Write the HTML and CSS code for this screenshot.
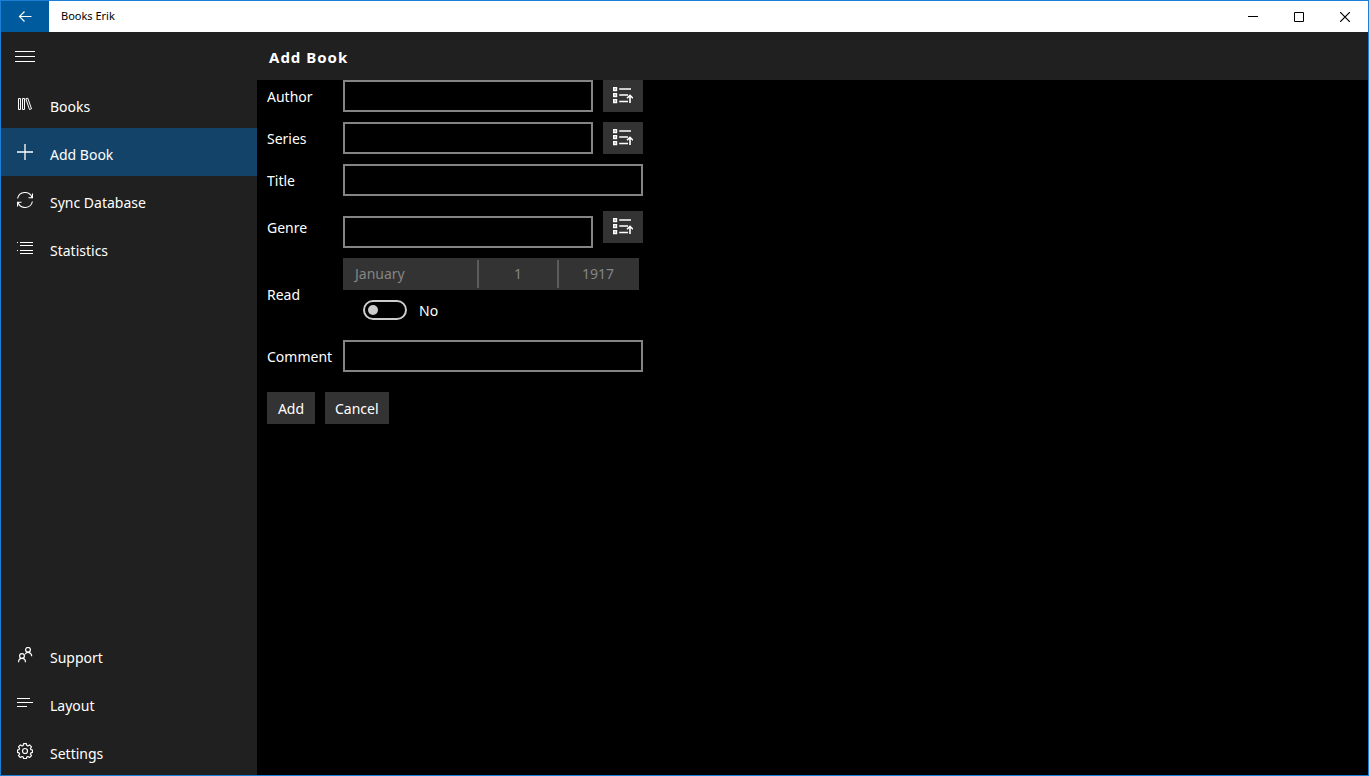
FILE: index.html
```html
<!DOCTYPE html>
<html lang="en">
<head>
<meta charset="utf-8">
<title>Books Erik</title>
<link rel="stylesheet" href="styles.css">
</head>
<body>
<svg class="sprite" aria-hidden="true">
  <symbol id="pick" viewBox="0 0 20 20">
    <g fill="none" stroke="currentColor" stroke-width="1.6">
      <path d="M.8 1.800h2.600v2.600H.8zM.8 7.800h2.600v2.600H.8zM.8 13.800h2.600v2.600H.8z"/>
      <path d="M6.200 3H18M6.200 9H15M6.200 15.500H15"/>
      <path d="M17 17V9.500M14 12.300l3-3 3 3"/>
    </g>
  </symbol>
</svg>
<div class="window">
  <header class="titlebar">
    <button class="back" type="button" aria-label="Back">
      <svg width="14" height="12" viewBox="0 0 14 12"><path d="M13.500 5.500h-12M6.500.5l-5 5 5 5" fill="none" stroke="currentColor" stroke-width="1.200"/></svg>
    </button>
    <span class="app-name">Books Erik</span>
    <div class="caption-buttons">
      <button type="button" aria-label="Minimize"><svg width="10" height="10" viewBox="0 0 10 10"><path d="M0 4.500h10" stroke="currentColor"/></svg></button>
      <button type="button" aria-label="Maximize"><svg width="10" height="10" viewBox="0 0 10 10"><path d="M.5.5h9v9h-9z" fill="none" stroke="currentColor"/></svg></button>
      <button type="button" aria-label="Close"><svg width="10" height="10" viewBox="0 0 10 10"><path d="M0 0l10 10M10 0L0 10" stroke="currentColor" stroke-width="1.200"/></svg></button>
    </div>
  </header>
  <div class="body">
    <nav class="sidebar">
      <button class="menu-toggle" type="button" aria-label="Menu">
        <svg width="20" height="12" viewBox="0 0 20 12"><path d="M0 1.500h20M0 6.500h20M0 11.500h20" stroke="currentColor"/></svg>
      </button>
      <a class="nav-item" href="#books">
        <svg class="icon" viewBox="0 0 16 16" fill="none" stroke="currentColor"><path d="M1.500 2.500h2v11h-2zM5.500 2.500h2v11h-2zM8.800 2.800l2-.6 3.700 10.600-2 .7z"/></svg>
        <span>Books</span>
      </a>
      <a class="nav-item current" href="#add" aria-current="page">
        <svg class="icon" viewBox="0 0 16 16" fill="none" stroke="currentColor" stroke-width="1.300"><path d="M8 0v16M0 8h16"/></svg>
        <span>Add Book</span>
      </a>
      <a class="nav-item" href="#sync">
        <svg class="icon" viewBox="0 0 16 16" fill="none" stroke="currentColor" stroke-width="1.100"><path d="M.6 6.500A7.500 7.500 0 0 1 15 5.500M15.500 1.500v4.200h-4M15.400 9.500A7.500 7.500 0 0 1 1 10.500M.5 14.500v-4.200h4"/></svg>
        <span>Sync Database</span>
      </a>
      <a class="nav-item" href="#statistics">
        <svg class="icon" viewBox="0 0 16 16" fill="none" stroke="currentColor"><path d="M3 2.500h13M3 5.500h13M3 10.500h13M3 13.500h13M0 2.500h1M0 10.500h1"/></svg>
        <span>Statistics</span>
      </a>
      <div class="spacer"></div>
      <a class="nav-item" href="#support">
        <svg class="icon" viewBox="0 0 16 16" fill="none" stroke="currentColor" stroke-width="1.200"><circle cx="11" cy="2.800" r="2.400"/><circle cx="5" cy="9" r="2.400"/><path d="M1.500 15.200c.2-5 6.800-5 7 0M8.200 7.200c1.800-3 6.300-2 6.500 2"/></svg>
        <span>Support</span>
      </a>
      <a class="nav-item" href="#layout">
        <svg class="icon" viewBox="0 0 16 16" fill="none" stroke="currentColor"><path d="M0 3.500h13M0 7.500h16M0 11.500h10"/></svg>
        <span>Layout</span>
      </a>
      <a class="nav-item" href="#settings">
        <svg class="icon" viewBox="0 0 16 16" fill="none" stroke="currentColor" stroke-width="1.200" stroke-linejoin="round"><circle cx="8" cy="8" r="2.500"/><path d="M6.600.6h2.800l.4 1.900 1.100.5 1.700-1.100 1.900 1.900-1.100 1.700.5 1.100 1.600.4v2.400l-1.600.5-.5 1.100 1.100 1.600-1.900 1.900-1.700-1-1.100.5-.4 1.600H6.600l-.4-1.600-1.100-.5-1.700 1-1.900-1.900 1.100-1.600-.5-1.100L.5 9.400V7l1.600-.4.500-1.100-1.100-1.700 1.900-1.900L5.100 3l1.100-.5z"/></svg>
        <span>Settings</span>
      </a>
    </nav>
    <main class="content">
      <h1 class="page-title">Add Book</h1>
      <form class="book-form">
        <label for="author">Author</label>
        <div class="field">
          <input class="text short" id="author" type="text">
          <button class="pick" type="button" aria-label="Choose author"><svg width="20" height="20"><use href="#pick"/></svg></button>
        </div>
        <label for="series">Series</label>
        <div class="field">
          <input class="text short" id="series" type="text">
          <button class="pick" type="button" aria-label="Choose series"><svg width="20" height="20"><use href="#pick"/></svg></button>
        </div>
        <label for="title">Title</label>
        <div class="field"><input class="text" id="title" type="text"></div>
        <label for="genre">Genre</label>
        <div class="field">
          <input class="text short lowered" id="genre" type="text">
          <button class="pick" type="button" aria-label="Choose genre"><svg width="20" height="20"><use href="#pick"/></svg></button>
        </div>
        <label for="read">Read</label>
        <div class="read">
          <button class="date" type="button" disabled>
            <span class="month">January</span><span>1</span><span>1917</span>
          </button>
          <div class="switch-row">
            <input class="switch" id="read" type="checkbox" role="switch">
            <label for="read">No</label>
          </div>
        </div>
        <label for="comment">Comment</label>
        <div class="field"><input class="text" id="comment" type="text"></div>
        <div class="actions">
          <button type="submit">Add</button>
          <button type="button">Cancel</button>
        </div>
      </form>
    </main>
  </div>
</div>
</body>
</html>
```
FILE: styles.css
```css
* {
  box-sizing: border-box;
}

body {
  margin: 0;
  background: #000;
  color: #fff;
  font: 14px/20px "Noto Sans", "Open Sans", sans-serif;
}

button,
input {
  margin: 0;
  padding: 0;
  border: 0;
  border-radius: 0;
  background: none;
  color: inherit;
  font: inherit;
}

svg {
  display: block;
  flex: none;
}

.sprite {
  position: absolute;
  width: 0;
  height: 0;
}

.window {
  display: flex;
  flex-direction: column;
  min-height: 100vh;
  border: 1px solid #1c7fd6;
}

.titlebar {
  display: flex;
  height: 31px;
  background: #fff;
  color: #000;
  font-size: 11px;
}

.back {
  display: grid;
  place-items: center;
  width: 48px;
  background: #005a9e;
  color: #fff;
}

.app-name {
  margin-left: 12px;
  line-height: 30px;
}

.caption-buttons {
  display: flex;
  margin-left: auto;
}

.caption-buttons button {
  display: grid;
  place-items: center;
  width: 46px;
}

.body {
  display: flex;
  flex: 1;
}

.sidebar {
  display: flex;
  flex-direction: column;
  flex: none;
  width: 256px;
  background: #202020;
}

.menu-toggle {
  display: grid;
  place-items: center;
  width: 48px;
  height: 48px;
}

.nav-item {
  display: flex;
  align-items: center;
  gap: 17px;
  height: 48px;
  padding-left: 16px;
  color: #fff;
  text-decoration: none;
}

.nav-item span {
  padding-top: 6px;
}

.current {
  background: #134369;
}

.icon {
  width: 16px;
  height: 16px;
}

.spacer {
  flex: 1;
}

.content {
  flex: 1;
  min-width: 0;
}

.page-title {
  height: 48px;
  margin: 0;
  padding-left: 12px;
  background: #202020;
  font-size: 15px;
  font-weight: 700;
  line-height: 50px;
  letter-spacing: 1px;
}

.book-form {
  display: grid;
  grid-template-columns: 66px 300px;
  gap: 10px;
  align-items: center;
  padding-left: 10px;
}

.book-form label {
  padding-top: 2px;
}

.field {
  display: flex;
  align-items: center;
  gap: 10px;
}

.text {
  flex: 1;
  min-width: 0;
  height: 32px;
  padding: 0 10px;
  border: 2px solid #848484;
}

.lowered {
  margin-top: 10px;
}

.pick {
  display: grid;
  place-items: center;
  width: 40px;
  height: 32px;
  background: #333;
}

.date {
  display: grid;
  grid-template-columns: 132px 80px 80px;
  height: 32px;
  border: 2px solid #333;
  background: #333;
  color: #858585;
  line-height: 28px;
}

.date span + span {
  border-left: 2px solid #5c5c5c;
}

.month {
  padding-left: 10px;
  text-align: left;
}

.switch-row {
  display: flex;
  align-items: center;
  gap: 12px;
  height: 40px;
  padding-left: 20px;
}

.switch {
  display: flex;
  align-items: center;
  width: 44px;
  height: 20px;
  padding-left: 3px;
  border: 2px solid #ccc;
  border-radius: 10px;
  appearance: none;
}

.switch::before {
  width: 10px;
  height: 10px;
  border-radius: 50%;
  background: #ccc;
  content: "";
}

.switch:checked::before {
  margin-left: 24px;
}

.actions {
  display: flex;
  grid-column: 1 / -1;
  gap: 10px;
  padding-top: 10px;
}

.actions button {
  min-width: 48px;
  height: 32px;
  padding: 2px 10px 0;
  background: #333;
}
```
